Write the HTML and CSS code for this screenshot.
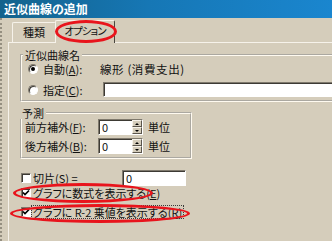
FILE: index.html
```html
<!DOCTYPE html>
<html lang="ja">
<head>
<meta charset="utf-8">
<link rel="stylesheet" href="styles.css">
</head>
<body>
<div class="dialog">
  <div class="titlebar">近似曲線の追加</div>
  <div class="content">
    <div class="tabs">
      <div class="tab">種類</div>
      <div class="tab active">オプション</div>
    </div>
    <div class="panel">
      <fieldset class="group g-name">
        <legend>近似曲線名</legend>
        <div class="row">
          <span class="radio checked"></span>
          <span class="lbl w-auto">自動(<u>A</u>):</span>
          <span class="value">線形 (消費支出)</span>
        </div>
        <div class="row r-custom">
          <span class="radio"></span>
          <span class="lbl w-custom">指定(<u>C</u>):</span>
          <span class="field wide"></span>
        </div>
      </fieldset>
      <fieldset class="group g-fore">
        <legend>予測</legend>
        <div class="row">
          <span class="lbl w-fore">前方補外(<u>F</u>):</span>
          <span class="field spin"><span class="val">0</span><span class="spinner"><span class="sb up"></span><span class="sb down"></span></span></span>
          <span class="unit">単位</span>
        </div>
        <div class="row r-back">
          <span class="lbl w-fore">後方補外(<u>B</u>):</span>
          <span class="field spin"><span class="val">0</span><span class="spinner"><span class="sb up"></span><span class="sb down"></span></span></span>
          <span class="unit">単位</span>
        </div>
      </fieldset>
      <div class="row r-intercept">
        <span class="check"></span>
        <span class="lbl w-int">切片(<u>S</u>) =</span>
        <span class="field int"><span class="val">0</span></span>
      </div>
      <div class="row r-opt">
        <span class="check"><svg width="8" height="8" viewBox="0 0 8 8"><polyline points="1,3.5 3,5.5 7,1.5" fill="none" stroke="#000" stroke-width="1.7"/></svg></span>
        <span class="lbl">グラフに数式を表示する(<u>E</u>)</span>
      </div>
      <div class="row r-opt r-r2">
        <span class="check"><svg width="8" height="8" viewBox="0 0 8 8"><polyline points="1,3.5 3,5.5 7,1.5" fill="none" stroke="#000" stroke-width="1.7"/></svg></span>
        <span class="lbl focus">グラフに R-2 乗値を表示する(<u>R</u>)</span>
      </div>
    </div>
  </div>
  <div class="mark m-tab"></div>
  <div class="mark m-eq"></div>
  <div class="mark m-r2"></div>
</div>
</body>
</html>
```
FILE: styles.css
```css
html, body {
  margin: 0;
  padding: 0;
  background: #d5cdbb;
}
.dialog {
  position: relative;
  width: 332px;
  height: 241px;
  overflow: hidden;
  background: #d5cdbb;
  font-family: "Noto Sans CJK JP", "Liberation Sans", sans-serif;
  font-size: 11px;
  color: #111;
  font-feature-settings: "palt";
}
.titlebar {
  height: 18px;
  line-height: 18px;
  padding-left: 4px;
  background: linear-gradient(90deg, #13628c 0%, #1677b5 45%, #1a86cf 100%);
  color: #fff;
  font-weight: bold;
  font-size: 12px;
}
.content {
  height: 223px;
  padding-left: 6px;
  border-left: 2px dotted #958f80;
}
.tabs {
  display: flex;
  align-items: flex-end;
  height: 24px;
  padding-left: 4px;
}
.tab {
  box-sizing: border-box;
  flex: none;
  height: 20px;
  width: 44px;
  line-height: 18px;
  text-align: center;
  border-top: 1px solid #f6f2ea;
  border-left: 1px solid #f6f2ea;
  border-right: 1px solid #7f796d;
  border-radius: 2px 2px 0 0;
}
.tab.active {
  position: relative;
  z-index: 1;
  width: 60px;
  height: 23px;
  margin-left: -1px;
  margin-bottom: -1px;
  line-height: 20px;
  font-size: 10.5px;
  letter-spacing: -1px;
  background: #d5cdbb;
  border-right: 1px solid #4a463f;
}
.panel {
  height: 200px;
  padding: 6px 0 0 11px;
  border-top: 1px solid #f6f2ea;
  border-left: 1px solid #f6f2ea;
}
.group {
  box-sizing: border-box;
  margin: 0;
  min-width: 0;
  border: 2px groove #fffaf0;
}
.group legend {
  padding: 0 2px;
  margin-left: -5px;
  line-height: 12px;
}
.g-name {
  width: 360px;
  padding: 0 0 3px 6px;
}
.g-fore {
  width: 172px;
  margin-top: 5px;
  padding: 0 0 3px 3px;
}
.row {
  display: flex;
  align-items: center;
  height: 16px;
  white-space: nowrap;
}
.r-custom {
  height: 15px;
  margin-top: 5px;
}
.r-back {
  margin-top: 3px;
}
.radio {
  box-sizing: border-box;
  position: relative;
  width: 10px;
  height: 10px;
  margin-right: 5px;
  border-radius: 50%;
  background: #fff;
  border: 1px solid;
  border-color: #7f796d #fff #fff #7f796d;
  box-shadow: inset 1px 1px 0 #3d3a34;
}
.radio.checked::after {
  content: "";
  position: absolute;
  left: 2px;
  top: 2px;
  width: 4px;
  height: 4px;
  border-radius: 50%;
  background: #000;
}
.lbl {
  display: inline-block;
}
.w-auto { width: 57px; }
.w-custom { width: 60px; }
.w-fore { width: 73px; }
.w-int { width: 89px; }
.value {
  display: inline-block;
  font-size: 11.5px;
  letter-spacing: 0.6px;
}
.field {
  box-sizing: border-box;
  display: flex;
  align-items: center;
  height: 16px;
  background: #fff;
  border: 1px solid;
  border-color: #7f796d #fff #fff #7f796d;
  box-shadow: inset 1px 1px 0 #3d3a34;
}
.field.wide {
  width: 260px;
  height: 15px;
}
.field.spin {
  width: 45px;
  padding-left: 3px;
  justify-content: space-between;
}
.field.int {
  width: 64px;
  padding-left: 3px;
}
.val {
  line-height: 14px;
}
.spinner {
  display: flex;
  flex-direction: column;
  width: 10px;
  height: 100%;
}
.sb {
  box-sizing: border-box;
  position: relative;
  flex: 1;
  background: #d5cdbb;
  border-top: 1px solid #f6f2ea;
  border-left: 1px solid #f6f2ea;
  border-right: 1px solid #5a554c;
  border-bottom: 1px solid #5a554c;
}
.sb::after {
  content: "";
  position: absolute;
  left: 2px;
  width: 0;
  height: 0;
  border-left: 2px solid transparent;
  border-right: 2px solid transparent;
}
.sb.up::after {
  top: 2px;
  border-bottom: 2px solid #000;
}
.sb.down::after {
  top: 2px;
  border-top: 2px solid #000;
}
.unit {
  margin-left: 5px;
}
.r-intercept {
  margin-top: 11px;
}
.check {
  box-sizing: border-box;
  display: flex;
  align-items: center;
  justify-content: center;
  width: 10px;
  height: 10px;
  margin: 0 2px 0 1px;
  background: #fff;
  border: 1px solid;
  border-color: #7f796d #fff #fff #7f796d;
  box-shadow: inset 1px 1px 0 #3d3a34;
}
.r-opt {
  height: 14px;
}
.r-r2 {
  margin-top: 5px;
}
.focus {
  padding: 0 1px;
  margin-left: -1px;
  outline: 1px dotted #3a3a3a;
  line-height: 12px;
}
.mark {
  position: absolute;
  z-index: 5;
  box-sizing: border-box;
  border: 3px solid #e8141c;
  border-radius: 50%;
}
.m-tab {
  left: 55px;
  top: 20px;
  width: 62px;
  height: 23px;
}
.m-eq {
  left: 13px;
  top: 183px;
  width: 140px;
  height: 20px;
}
.m-r2 {
  left: 10px;
  top: 204px;
  width: 180px;
  height: 19px;
}
```
